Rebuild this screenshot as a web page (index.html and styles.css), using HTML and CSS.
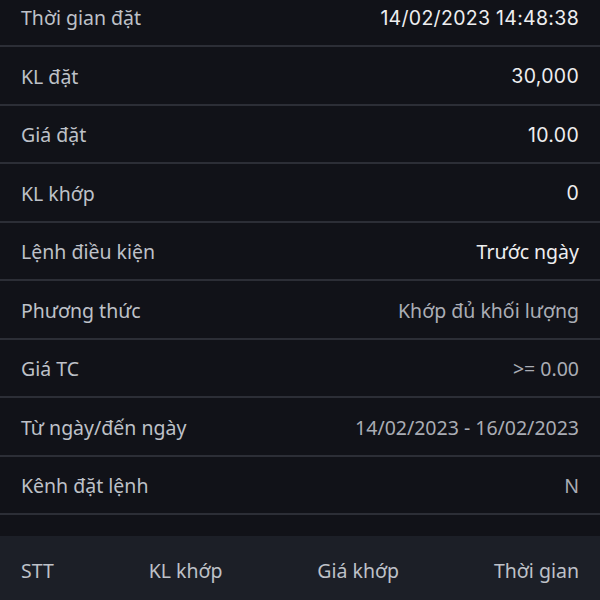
FILE: index.html
```html
<!DOCTYPE html>
<html lang="vi">
<head>
<meta charset="utf-8">
<link rel="stylesheet" href="styles.css">
</head>
<body>
<div class="screen">
  <div class="details">
    <div class="row"><span class="label">Thời gian đặt</span><span class="value num">14/02/2023 14:48:38</span></div>
    <div class="row"><span class="label">KL đặt</span><span class="value num">30,000</span></div>
    <div class="row"><span class="label">Giá đặt</span><span class="value num">10.00</span></div>
    <div class="row"><span class="label">KL khớp</span><span class="value num">0</span></div>
    <div class="row"><span class="label">Lệnh điều kiện</span><span class="value">Trước ngày</span></div>
    <div class="row"><span class="label">Phương thức</span><span class="value muted">Khớp đủ khối lượng</span></div>
    <div class="row"><span class="label">Giá TC</span><span class="value muted">&gt;= 0.00</span></div>
    <div class="row"><span class="label">Từ ngày/đến ngày</span><span class="value muted">14/02/2023 - 16/02/2023</span></div>
    <div class="row"><span class="label">Kênh đặt lệnh</span><span class="value muted">N</span></div>
  </div>
  <div class="table-head">
    <span>STT</span>
    <span>KL khớp</span>
    <span>Giá khớp</span>
    <span>Thời gian</span>
  </div>
</div>
</body>
</html>
```
FILE: styles.css
```css
html, body {
  margin: 0;
  padding: 0;
  background: #111218;
}
.screen {
  width: 600px;
  height: 600px;
  overflow: hidden;
  background: #111218;
  display: flex;
  flex-direction: column;
}
.details {
  margin-top: -11.5px;
  padding-bottom: 21px;
}
.row {
  height: 56.5px;
  border-bottom: 2px solid #2c2e36;
  display: flex;
  align-items: center;
  justify-content: space-between;
  padding: 0 21px;
}
.label {
  font-family: "Noto Sans", sans-serif;
  font-size: 19.5px;
  color: #bec1c8;
  position: relative;
  top: 1px;
}
.value {
  font-family: "Noto Sans", sans-serif;
  font-size: 19.5px;
  color: #eeeef0;
  position: relative;
  top: 1px;
}
.value.num {
  font-family: "Inter", "Noto Sans", sans-serif;
  letter-spacing: 0.3px;
}
.value.muted {
  color: #aaadb5;
}
.table-head {
  flex: 1;
  background: #1c1f27;
  display: flex;
  align-items: center;
  justify-content: space-between;
  padding: 4px 21px 0;
  font-family: "Noto Sans", sans-serif;
  font-size: 19.5px;
  color: #bec1c8;
}
```
